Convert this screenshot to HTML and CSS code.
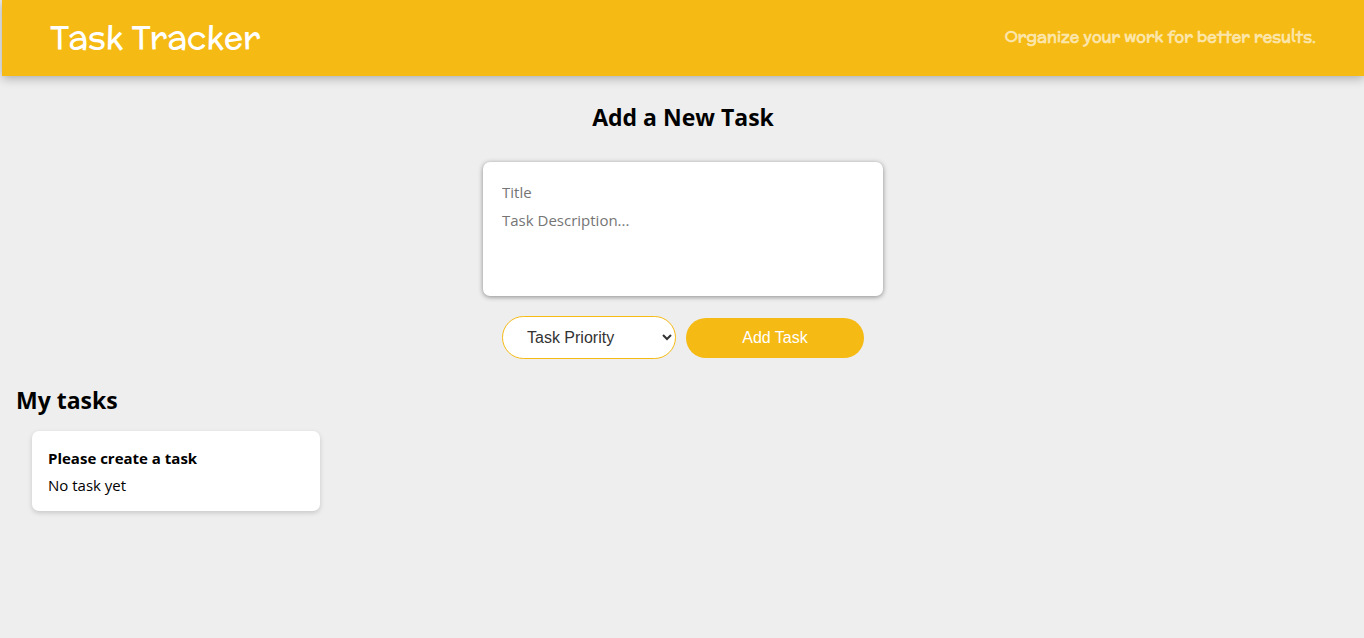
FILE: index.html
```html
<!DOCTYPE html>
<html lang="en">
<head>
<meta charset="utf-8">
<title>Task Tracker</title>
<link rel="stylesheet" href="styles.css">
</head>
<body>
<header class="header">
  <h1 class="brand">Task Tracker</h1>
  <p class="tagline">Organize your work for better results.</p>
</header>
<main>
  <form class="task-form">
    <h2 class="heading">Add a New Task</h2>
    <div class="fields">
      <input class="field" type="text" placeholder="Title" aria-label="Title">
      <textarea class="field description" placeholder="Task Description..." aria-label="Task description"></textarea>
    </div>
    <div class="actions">
      <select class="priority" aria-label="Task priority">
        <option>Task Priority</option>
        <option>High</option>
        <option>Medium</option>
        <option>Low</option>
      </select>
      <button class="add" type="button">Add Task</button>
    </div>
  </form>
  <section class="tasks">
    <h2 class="heading">My tasks</h2>
    <article class="card">
      <h3 class="card-title">Please create a task</h3>
      <p class="card-text">No task yet</p>
    </article>
  </section>
</main>
</body>
</html>
```
FILE: styles.css
```css
* {
  box-sizing: border-box;
}

body {
  margin: 0;
  background: #eeeeee;
  color: #000;
  font-family: "Segoe UI", "Open Sans", "Noto Sans", sans-serif;
  font-size: 15px;
}

h1, h2, h3, p {
  margin: 0;
}

.header {
  display: flex;
  align-items: center;
  justify-content: space-between;
  margin-left: 2px;
  padding: 15px 48px 17px;
  background: #f5ba13;
  box-shadow: 0 2px 10px rgba(0, 0, 0, 0.3);
  font-family: "McLaren", "Lato", sans-serif;
}

.brand {
  color: #fff;
  font-size: 32px;
  line-height: 44px;
  font-weight: 400;
}

.tagline {
  padding-bottom: 2px;
  color: #fce5a8;
  font-size: 16px;
  font-weight: 700;
}

.heading {
  font-size: 23px;
  line-height: 32px;
  font-weight: 700;
}

.task-form {
  display: flex;
  flex-direction: column;
  align-items: center;
  padding: 25px 0 0 2px;
}

.fields {
  display: flex;
  flex-direction: column;
  width: 400px;
  margin-top: 29px;
  padding: 15px 16px 17px;
  background: #fff;
  border-radius: 7px;
  box-shadow: 0 1px 5px rgb(138, 137, 137);
}

.field {
  width: 100%;
  height: 29px;
  padding: 4px 3px;
  border: 0;
  outline: 0;
  resize: none;
  background: transparent;
  font: inherit;
  line-height: 21px;
}

.field::placeholder {
  color: #757575;
}

.description {
  height: 73px;
}

.actions {
  display: flex;
  align-items: center;
  gap: 10px;
  width: 362px;
  margin-top: 20px;
}

.priority,
.add {
  border-radius: 24px;
  font-family: "Liberation Sans", Arial, sans-serif;
  font-size: 16px;
}

.priority {
  width: 174px;
  height: 43px;
  padding: 0 2px 0 20px;
  border: 1px solid #f5ba13;
  background: #fff;
  color: #333;
}

.add {
  flex: 1;
  height: 40px;
  border: 0;
  background: #f5ba13;
  color: #fff;
}

.tasks {
  padding: 25px 16px 0;
}

.card {
  width: 288px;
  margin: 15px 16px;
  padding: 16px 16px 15px;
  background: #fff;
  border-radius: 7px;
  box-shadow: 0 2px 5px rgba(0, 0, 0, 0.16);
}

.card-title {
  font-size: 15px;
  line-height: 22px;
  font-weight: 700;
}

.card-text {
  margin-top: 5px;
  font-size: 15px;
  line-height: 22px;
}
```
